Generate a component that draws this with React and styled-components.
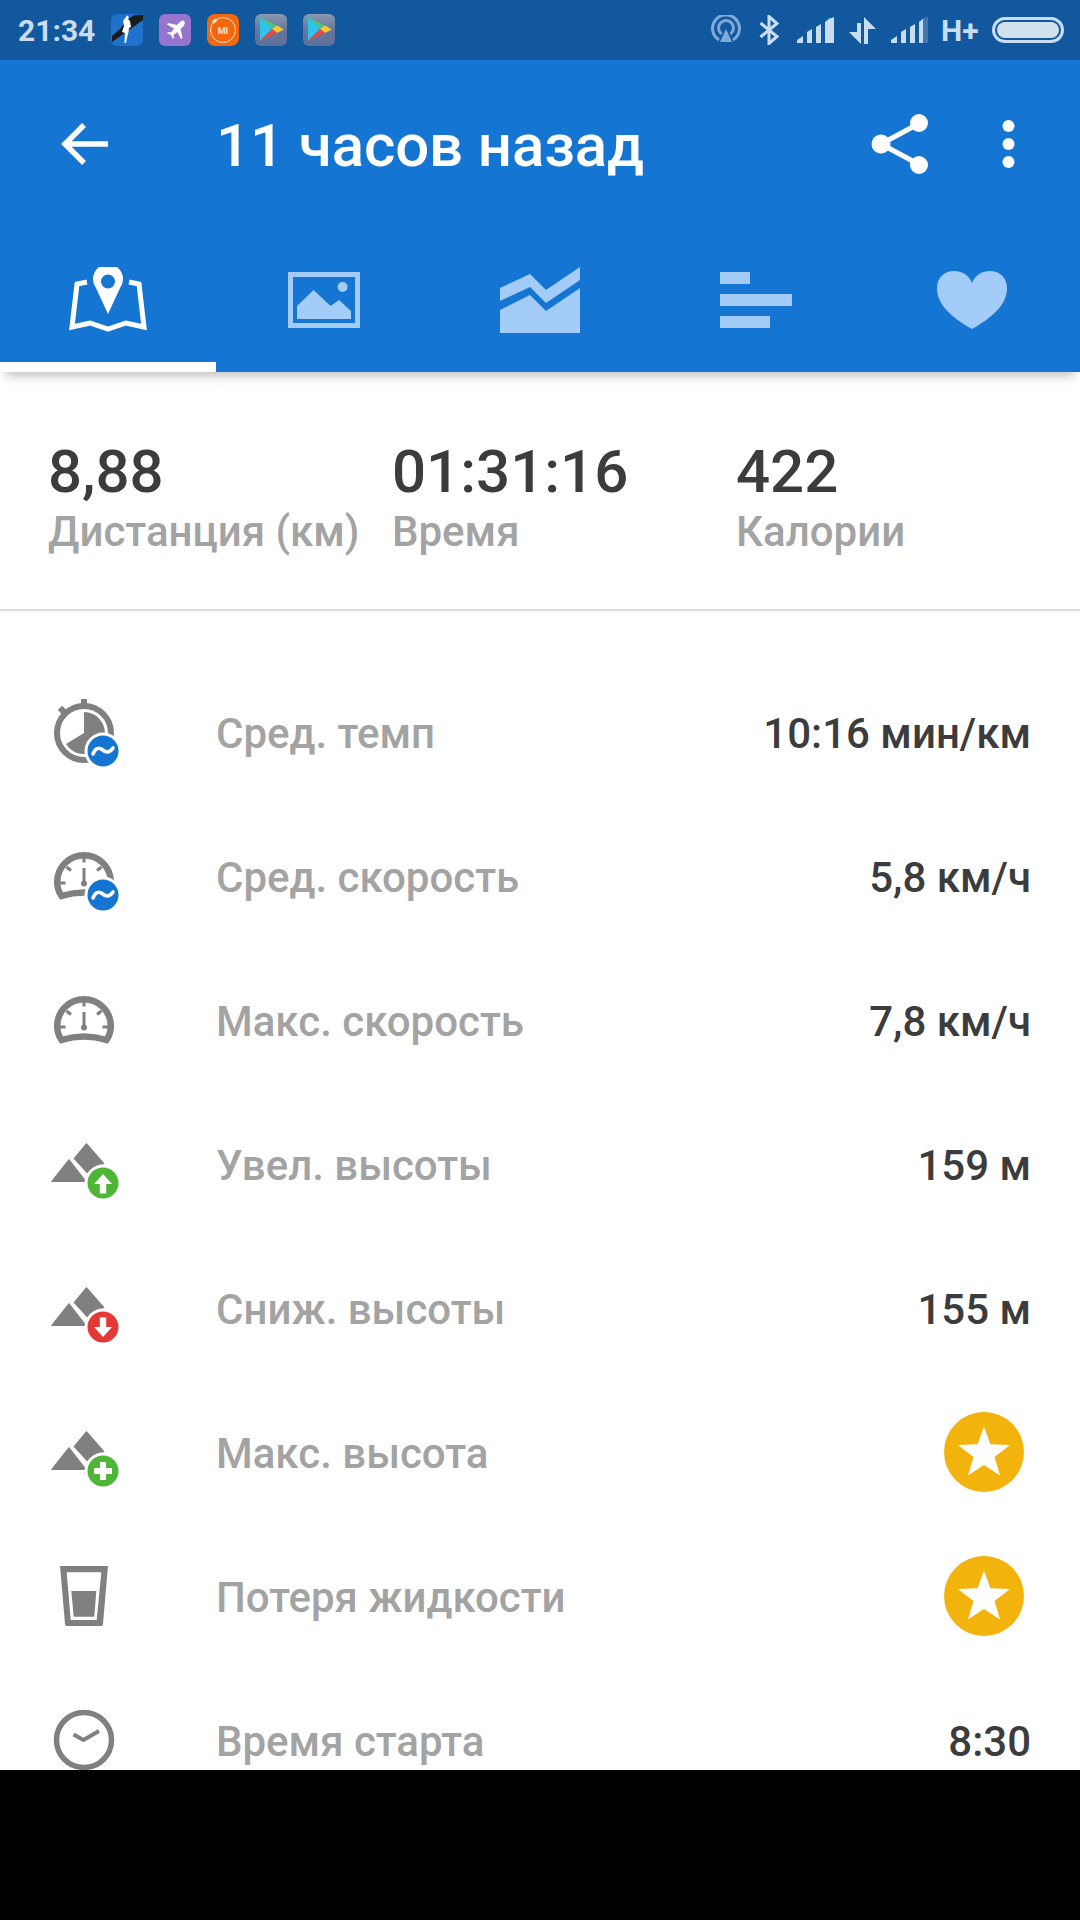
import React from 'react';
import styled, { createGlobalStyle } from 'styled-components';

const GRAY = '#808080';
const LIGHT = '#a3cdf8';
const STATUS = '#c9dcf0';

const Global = createGlobalStyle`
  html, body {
    margin: 0;
    padding: 0;
    background: #000;
  }
  * { box-sizing: border-box; }
`;

const Screen = styled.div`
  width: 1080px;
  height: 1770px;
  background: #fff;
  overflow: hidden;
  font-family: Roboto, "Noto Sans", sans-serif;
`;

const StatusBar = styled.div`
  height: 60px;
  background: #11589f;
  display: flex;
  align-items: center;
  justify-content: space-between;
  padding: 0 16px 0 18px;
`;

const StatusGroup = styled.div`
  display: flex;
  align-items: center;
  gap: ${(p) => p.$gap}px;
`;

const Time = styled.span`
  width: 75px;
  margin-right: 2px;
  color: ${STATUS};
  font-size: 30px;
  font-weight: 700;
`;

const AppIcon = styled.svg`
  width: 32px;
  height: 32px;
  display: block;
`;

const NetType = styled.span`
  color: ${STATUS};
  font-size: 30px;
  font-weight: 700;
  margin-left: -2px;
  width: 36px;
`;

const Battery = styled.div`
  width: 72px;
  height: 26px;
  border: 3px solid ${STATUS};
  border-radius: 13px;
  padding: 2px;
`;

const BatteryFill = styled.div`
  height: 100%;
  background: #d3e0ee;
  border-radius: 8px;
`;

const AppBar = styled.header`
  background: #1575d3;
  box-shadow: 0 10px 10px -6px rgba(0, 0, 0, 0.25);
  position: relative;
`;

const Toolbar = styled.div`
  height: 168px;
  display: flex;
  align-items: center;
  padding-right: 65px;
`;

const BackSlot = styled.div`
  width: 216px;
  padding-left: 60px;
  display: flex;
  align-items: center;
`;

const Title = styled.h1`
  flex: 1;
  margin: 0;
  padding-top: 3px;
  color: #fff;
  font-size: 60px;
  font-weight: 500;
  letter-spacing: -0.1px;
`;

const ToolIcon = styled.svg`
  display: block;
  margin-left: ${(p) => p.$left || 0}px;
`;

const Tabs = styled.div`
  display: grid;
  grid-template-columns: repeat(5, 216px);
`;

const Tab = styled.div`
  height: 144px;
  display: flex;
  align-items: center;
  justify-content: center;
  box-shadow: ${(p) => (p.$active ? 'inset 0 -10px 0 #fff' : 'none')};
`;

const Stats = styled.section`
  display: grid;
  grid-template-columns: repeat(3, 344px);
  padding: 65px 0 52px 48px;
  border-bottom: 2px solid #dedede;
`;

const StatValue = styled.div`
  color: #3c3c3c;
  font-size: 60px;
  line-height: 70px;
  font-weight: 500;
`;

const StatLabel = styled.div`
  color: #a3a3a3;
  font-size: 42px;
  line-height: 50px;
  font-weight: 500;
  white-space: nowrap;
`;

const List = styled.section`
  padding-top: 51px;
`;

const Row = styled.div`
  height: 144px;
  display: flex;
  align-items: center;
  padding: 0 49px 0 50px;
`;

const RowIcon = styled.svg`
  width: 80px;
  height: 80px;
  display: block;
  flex: none;
`;

const RowLabel = styled.div`
  flex: 1;
  margin-left: 86px;
  padding-bottom: 2px;
  color: #a3a3a3;
  font-size: 42px;
  font-weight: 500;
`;

const RowValue = styled.div`
  padding-bottom: 2px;
  color: #3c3c3c;
  font-size: 42px;
  font-weight: 500;
`;

const StarBadge = styled.svg`
  width: 80px;
  height: 80px;
  display: block;
  margin: -4px 7px 0 0;
`;

const Badge = ({ color, children }) => (
  <g transform="translate(53 57)">
    <circle r="18.5" fill="#fff" />
    <circle r="15.5" fill={color} />
    {children}
  </g>
);

const WaveBadge = () => (
  <Badge color="#1575d3">
    <path
      d="M-10 3C-8-3-4-4-1-1.500S6 3 10-3"
      fill="none"
      stroke="#fff"
      strokeWidth="3.600"
      strokeLinecap="round"
    />
  </Badge>
);

const Mountains = () => (
  <path
    fill={GRAY}
    stroke={GRAY}
    strokeWidth="1"
    strokeLinejoin="round"
    d="M1.500 55.500L19 33.500L36 55.500ZM24 32.500L36.500 17.500L54 37.500L40 50Z"
  />
);

const Stopwatch = () => (
  <RowIcon viewBox="0 0 80 80">
    <circle cx="34" cy="39" r="27" fill="none" stroke={GRAY} strokeWidth="6" />
    <rect x="31" y="5" width="6" height="7" fill={GRAY} />
    <rect x="9" y="13" width="6" height="6" fill={GRAY} transform="rotate(-40 12 16)" />
    <path d="M34 18A21 21 0 1 1 16 50L34 39Z" fill={GRAY} />
    <WaveBadge />
  </RowIcon>
);

const Gauge = ({ avg }) => (
  <RowIcon viewBox="0 0 80 80">
    <path
      d="M11.500 58C8 53 7.200 48 7.200 44A26.800 26.800 0 0 1 60.800 44C60.800 48 60 53 56.500 58C42 53.500 26 53.500 11.500 58Z"
      fill="none"
      stroke={GRAY}
      strokeWidth="6.500"
    />
    <path
      d="M34 19V24.500M16.500 29L21 32.500M51.500 29L47 32.500M10 45H15.500M52.500 45H58M34 30V45"
      stroke={GRAY}
      strokeWidth="3"
      fill="none"
    />
    <circle cx="34" cy="45.500" r="3" fill={GRAY} />
    {avg && <WaveBadge />}
  </RowIcon>
);

const UpBadge = () => (
  <Badge color="#4db636">
    <path d="M0-9L9 1H3.200V10.500H-3.200V1H-9Z" fill="#fff" />
  </Badge>
);

const DownBadge = () => (
  <Badge color="#e53935">
    <path d="M0 10L9 0H3.200V-9.500H-3.200V0H-9Z" fill="#fff" />
  </Badge>
);

const PlusBadge = () => (
  <Badge color="#4db636">
    <path d="M-3-9H3V-3H9V3H3V9H-3V3H-9V-3H-3Z" fill="#fff" />
  </Badge>
);

const Mountain = ({ children }) => (
  <RowIcon viewBox="0 0 80 80">
    <Mountains />
    {children}
  </RowIcon>
);

const Glass = () => (
  <RowIcon viewBox="0 0 80 80">
    <path
      fillRule="evenodd"
      fill={GRAY}
      d="M10 8H58L53 66Q53 68 51 68H17Q15 68 15 66ZM16.700 14.300L20.700 62H46.700L51.300 14.300Z"
    />
    <path d="M21.300 33H46.300L44.300 58.700H23.700Z" fill={GRAY} />
  </RowIcon>
);

const Clock = () => (
  <RowIcon viewBox="0 0 80 80">
    <circle cx="34" cy="38" r="27.500" fill="none" stroke={GRAY} strokeWidth="5.500" />
    <path d="M23.500 32.500L33.500 38L49 29" fill="none" stroke={GRAY} strokeWidth="4" />
  </RowIcon>
);

const Star = () => (
  <StarBadge viewBox="0 0 80 80">
    <circle cx="40" cy="40" r="40" fill="#f2b30c" />
    <path
      d="M40 14.500L46.400 32.200L66 33L50.500 45L56 63.500L40 53L24 63.500L29.500 45L14 33L33.600 32.200Z"
      fill="#fff"
    />
  </StarBadge>
);

const Runner = () => (
  <AppIcon viewBox="0 0 32 32">
    <rect width="32" height="32" rx="6" fill="#1e72cc" />
    <path d="M1 28L32 6V1H24Q16 4 10 14L1 22Z" fill="#1b1b1b" />
    <path
      d="M16 1.500a2 2 0 0 1 1 3.500L19 7L20 13L18 14L17.500 18L16 24L15 29H13.500L14 19L11 18L13 12L12 7Z"
      fill="#fff"
    />
  </AppIcon>
);

const Plane = () => (
  <AppIcon viewBox="0 0 32 32">
    <rect width="32" height="32" rx="6" fill="#9575cd" />
    <path
      d="M25 7C24 6 22.500 6.500 21 8L18 11L9 9L8 10.500L15 14.500L12 18.500L9 18L8 19L12 21L14 25L15 24L14.500 21L18.500 18L22 25L23.500 24L21.500 15L25 11.500C26 10 26 8 25 7Z"
      fill="#fff"
    />
  </AppIcon>
);

const MiIcon = () => (
  <AppIcon viewBox="0 0 32 32">
    <rect width="32" height="32" rx="8" fill="#f3670f" />
    <circle cx="16" cy="16" r="12.500" fill="none" stroke="#ffe2cc" strokeWidth="1" />
    <rect x="5" y="6" width="5" height="3" fill="#ffe2cc" transform="rotate(-40 7 7)" />
    <text x="16" y="19.500" textAnchor="middle" fontSize="9" fontWeight="700" fontFamily="Roboto" fill="#ffe2cc">
      MI
    </text>
  </AppIcon>
);

const PlayStore = ({ id }) => (
  <AppIcon viewBox="0 0 32 32">
    <defs>
      <linearGradient id={id} x1="0" y1="0" x2="0" y2="1">
        <stop offset="0" stopColor="#8a97b0" />
        <stop offset="0.5" stopColor="#63769f" />
        <stop offset="1" stopColor="#5e7199" />
      </linearGradient>
    </defs>
    <rect width="32" height="32" rx="6" fill={`url(#${id})`} />
    <path d="M5 3L17 15L5 27Z" fill="#2fc4ee" />
    <path d="M5 3L22 11.500L17 15Z" fill="#4fc27a" />
    <path d="M22 11.500L29 15.500L22 19L17 15Z" fill="#fdc62f" />
    <path d="M5 27L17 15L22 19Z" fill="#e5484d" />
  </AppIcon>
);

const Hotspot = () => (
  <svg width="33" height="30" viewBox="0 0 33 30">
    <g fill="none" stroke="#7fa9d6" strokeWidth="3">
      <path d="M8 25A13.500 13.500 0 1 1 22 25" />
      <path d="M10.500 19A7.500 7.500 0 1 1 19.500 19" />
    </g>
    <path d="M15 14L21 27H9Z" fill="#7fa9d6" />
  </svg>
);

const Bluetooth = () => (
  <svg width="23" height="30" viewBox="0 0 23 30">
    <path
      d="M1.500 8L18 21.500L10 28.500V1.500L18 8.500L1.500 22"
      fill="none"
      stroke={STATUS}
      strokeWidth="3"
    />
  </svg>
);

const Signal = ({ dim }) => (
  <svg width="37" height="26" viewBox="0 0 37 26">
    <path d="M0 26V23L6 19V26Z" fill={STATUS} />
    <path d="M10 26V15L15 12V26Z" fill={STATUS} />
    <path d="M19 26V10L24 7V26Z" fill={STATUS} />
    <path d="M28 26V5L33 1V26Z" fill={STATUS} />
    {dim ? (
      <path d="M32 26V1L37 0V26Z" fill="#3f78b2" />
    ) : (
      <path d="M32 26V2L37 0V26Z" fill={STATUS} />
    )}
  </svg>
);

const DataArrows = () => (
  <svg width="27" height="27" viewBox="0 0 27 27">
    <path d="M8 6H12V27L0 15H8Z" fill={STATUS} />
    <path d="M15 0L27 12H19V27H15Z" fill={STATUS} />
  </svg>
);

const TabMap = () => (
  <svg width="80" height="66" viewBox="0 0 80 66">
    <path
      d="M19 15L9 17L4 60L22 56L40 62L58 56L76 60L71 17L61 15"
      fill="none"
      stroke="#fff"
      strokeWidth="5"
    />
    <path
      fillRule="evenodd"
      fill="#fff"
      d="M40 47L28 21A15 15 0 1 1 52 21ZM40 7.500A7 7 0 1 0 40 21.500A7 7 0 1 0 40 7.500Z"
    />
  </svg>
);

const TabImage = () => (
  <svg width="72" height="56" viewBox="0 0 72 56">
    <rect x="2.500" y="2.500" width="67" height="51" fill="none" stroke={LIGHT} strokeWidth="5" />
    <path d="M9 34L25.600 18L42.600 34L51 28L63 39V47H9Z" fill={LIGHT} />
    <circle cx="54.600" cy="15" r="5" fill={LIGHT} />
  </svg>
);

const TabChart = () => (
  <svg width="80" height="66" viewBox="0 0 80 66">
    <path d="M0 21L30 7L46 23L80 0V13L46 36L30 20L0 34Z" fill={LIGHT} />
    <path d="M0 43L30 28L46 44L80 21V66H0Z" fill={LIGHT} />
  </svg>
);

const TabBars = () => (
  <svg width="72" height="56" viewBox="0 0 72 56">
    <rect width="30" height="12" fill={LIGHT} />
    <rect y="22" width="72" height="12" fill={LIGHT} />
    <rect y="44" width="50" height="12" fill={LIGHT} />
  </svg>
);

const TabHeart = () => (
  <svg width="70" height="58" viewBox="0 0 70 58">
    <path
      d="M35 58C10 44 0 31 0 17C0 6 8 0 17 0C25 0 32 4 35 12C38 4 45 0 53 0C62 0 70 6 70 17C70 31 60 44 35 58Z"
      fill={LIGHT}
    />
  </svg>
);

const stats = [
  { value: '8,88', label: 'Дистанция (км)' },
  { value: '01:31:16', label: 'Время' },
  { value: '422', label: 'Калории' },
];

const rows = [
  { icon: <Stopwatch />, label: 'Сред. темп', value: '10:16 мин/км' },
  { icon: <Gauge avg />, label: 'Сред. скорость', value: '5,8 км/ч' },
  { icon: <Gauge />, label: 'Макс. скорость', value: '7,8 км/ч' },
  { icon: <Mountain><UpBadge /></Mountain>, label: 'Увел. высоты', value: '159 м' },
  { icon: <Mountain><DownBadge /></Mountain>, label: 'Сниж. высоты', value: '155 м' },
  { icon: <Mountain><PlusBadge /></Mountain>, label: 'Макс. высота', star: true },
  { icon: <Glass />, label: 'Потеря жидкости', star: true },
  { icon: <Clock />, label: 'Время старта', value: '8:30' },
];

const App = () => {
  return (
    <Screen>
      <Global />
      <StatusBar>
        <StatusGroup $gap={16}>
          <Time>21:34</Time>
          <Runner />
          <Plane />
          <MiIcon />
          <PlayStore id="play-a" />
          <PlayStore id="play-b" />
        </StatusGroup>
        <StatusGroup $gap={15}>
          <Hotspot />
          <Bluetooth />
          <Signal />
          <DataArrows />
          <Signal dim />
          <NetType>H+</NetType>
          <Battery>
            <BatteryFill />
          </Battery>
        </StatusGroup>
      </StatusBar>
      <AppBar>
        <Toolbar>
          <BackSlot>
            <svg width="48" height="44" viewBox="0 0 48 44">
              <path d="M48 22H5M24 3L5 22L24 41" fill="none" stroke="#fff" strokeWidth="5.500" />
            </svg>
          </BackSlot>
          <Title>11 часов назад</Title>
          <ToolIcon width="58" height="60" viewBox="0 0 58 60">
            <path d="M10 30L49 9M10 30L49 51" stroke="#fff" strokeWidth="5" />
            <circle cx="10" cy="30" r="9.500" fill="#fff" />
            <circle cx="48" cy="9" r="9" fill="#fff" />
            <circle cx="48" cy="51" r="9" fill="#fff" />
          </ToolIcon>
          <ToolIcon $left={73} width="13" height="50" viewBox="0 0 13 50">
            <circle cx="6.500" cy="7" r="6" fill="#fff" />
            <circle cx="6.500" cy="25" r="6" fill="#fff" />
            <circle cx="6.500" cy="43" r="6" fill="#fff" />
          </ToolIcon>
        </Toolbar>
        <Tabs>
          <Tab $active><TabMap /></Tab>
          <Tab><TabImage /></Tab>
          <Tab><TabChart /></Tab>
          <Tab><TabBars /></Tab>
          <Tab><TabHeart /></Tab>
        </Tabs>
      </AppBar>
      <Stats>
        {stats.map((item, i) => {
          return (
            <div key={i}>
              <StatValue>{item.value}</StatValue>
              <StatLabel>{item.label}</StatLabel>
            </div>
          );
        })}
      </Stats>
      <List>
        {rows.map((item, i) => {
          return (
            <Row key={i}>
              {item.icon}
              <RowLabel>{item.label}</RowLabel>
              {item.star ? <Star /> : <RowValue>{item.value}</RowValue>}
            </Row>
          );
        })}
      </List>
    </Screen>
  );
};

export default App;
